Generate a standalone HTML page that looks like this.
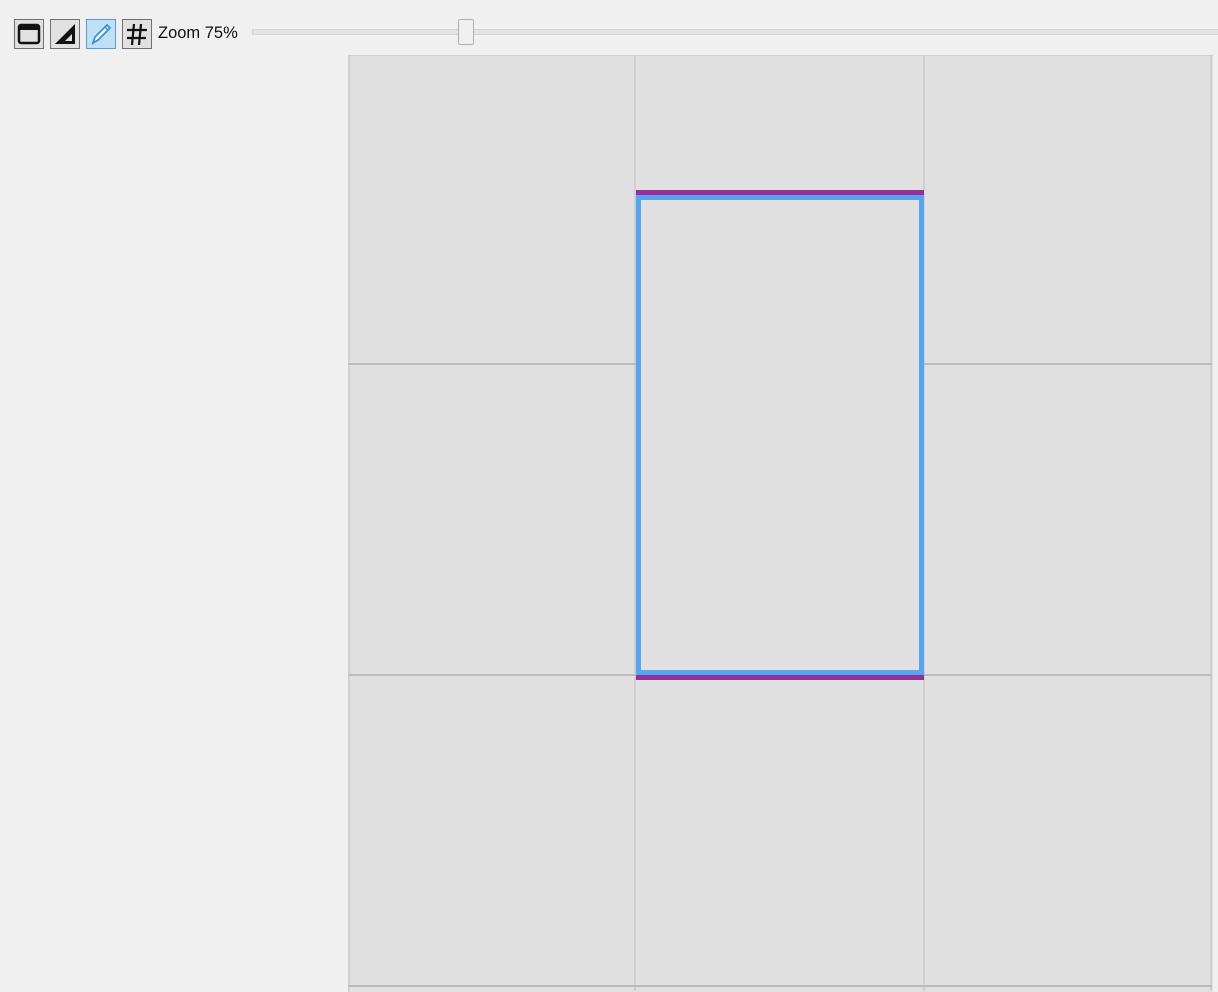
<!DOCTYPE html>
<html><head><meta charset="utf-8"><style>
html,body{margin:0;padding:0;}
body{width:1218px;height:991px;background:#f0f0f0;position:relative;overflow:hidden;font-family:"Liberation Sans",sans-serif;}
.btn{position:absolute;top:19px;width:28px;height:28px;border:1px solid #707070;background:#e1e1e1;box-sizing:content-box;}
.btn svg{position:absolute;left:0;top:0;}
.abs{position:absolute;}
</style></head><body>
<div class="btn" style="left:14px"><svg width="28" height="28"><rect x="4" y="5" width="20" height="18" rx="2" fill="none" stroke="#111" stroke-width="2.5"/><rect x="4" y="5" width="20" height="5" fill="#111"/></svg></div>
<div class="btn" style="left:50px"><svg width="28" height="28"><path d="M4 24 L24 4 L24 24 Z" fill="#111"/><path d="M14 21 L21 14 L21 21 Z" fill="#e1e1e1"/></svg></div>
<div class="btn" style="left:86px;background:#bfe0f5;border-color:#5a9ad8"><svg width="28" height="28"><path d="M6 23 L8 17 L20 5 L23 8 L11 20 Z" fill="#fff" stroke="#3a8ee0" stroke-width="1.8"/><path d="M18 7 L21 10" stroke="#3a8ee0" stroke-width="1.5"/></svg></div>
<div class="btn" style="left:122px"><svg width="28" height="28"><path d="M11 4 L9 25 M18 4 L16 25 M4 10 L24 10 M4 18 L23 18" stroke="#111" stroke-width="2.2" fill="none"/></svg></div>
<div class="abs" style="left:158px;top:24px;font-size:16.5px;color:#111;">Zoom 75%</div>
<div class="abs" style="left:252px;top:29px;width:966px;height:4px;background:#e3e3e3;border:1px solid #d6d6d6;"></div>
<div class="abs" style="left:458px;top:19px;width:14px;height:24px;background:#f0f0f0;border:1px solid #b0b0b0;border-radius:2px;"></div>

<div class="abs" style="left:348px;top:55px;width:863px;height:936px;background:#e0e0e0;border-left:2px solid #d0d0d0;border-top:1px solid #d0d0d0;"></div>
<div class="abs" style="left:634px;top:55px;width:2px;height:936px;background:#cfcfcf;"></div>
<div class="abs" style="left:923px;top:55px;width:2px;height:936px;background:#cfcfcf;"></div>
<div class="abs" style="left:1210px;top:55px;width:2px;height:936px;background:#cfcfcf;"></div>
<div class="abs" style="left:348px;top:363px;width:864px;height:2px;background:#bcbcbc;"></div>
<div class="abs" style="left:348px;top:674px;width:864px;height:2px;background:#bcbcbc;"></div>
<div class="abs" style="left:348px;top:985px;width:864px;height:2px;background:#bcbcbc;"></div>

<div class="abs" style="left:636px;top:190px;width:288px;height:5px;background:#982f98;"></div>
<div class="abs" style="left:636px;top:675px;width:288px;height:5px;background:#982f98;"></div>
<div class="abs" style="left:636px;top:195px;width:278px;height:470px;border:5px solid #55a5f0;background:#e0e0e0;"></div>
</body></html>
